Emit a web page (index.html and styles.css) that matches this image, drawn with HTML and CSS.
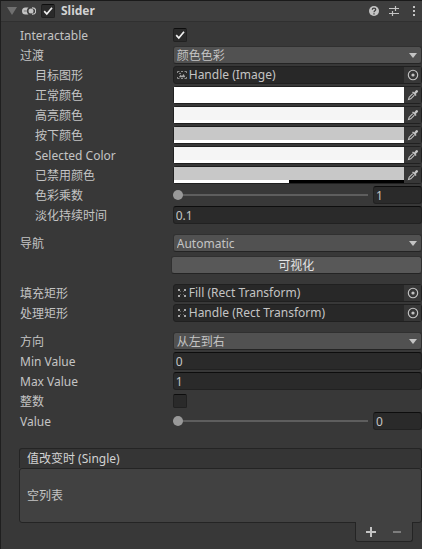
FILE: index.html
```
<!DOCTYPE html>
<html lang="zh-CN">
<head>
<meta charset="utf-8">
<meta name="viewport" content="width=device-width, initial-scale=1">
<title>Slider</title>
<link rel="stylesheet" href="styles.css">
</head>
<body>
<svg class="defs" aria-hidden="true">
  <symbol id="check" viewBox="0 0 14 14"><path d="M3.2 7.2 5.8 10 11 3.8" fill="none" stroke="currentColor" stroke-width="1.7"/></symbol>
  <symbol id="picker" viewBox="0 0 12 12"><circle cx="6" cy="6" r="4.7" fill="none" stroke="currentColor" stroke-width="1.1"/><circle cx="6" cy="6" r="1.6" fill="currentColor"/></symbol>
  <symbol id="dropper" viewBox="0 0 12 12"><path d="M5.800 4.600 2.200 8.200 1.500 10.500 3.800 9.800 7.400 6.200" fill="none" stroke="currentColor" stroke-width="1.100"/><path d="M5 3.200 6 2.400 7.200 3.400 8.800 1.500Q9.800 .6 10.700 1.400T10.600 3.300L8.700 4.900 9.600 6 8.700 7Z" fill="currentColor"/></symbol>
  <symbol id="rect" viewBox="0 0 10 10"><path d="M1 1h2v2H1zM7 1h2v2H7zM1 7h2v2H1zM7 7h2v2H7z" fill="currentColor"/><path d="M3 3h1v1H3zM6 3h1v1H6zM3 6h1v1H3zM6 6h1v1H6z" fill="currentColor" opacity=".5"/></symbol>
  <symbol id="image" viewBox="0 0 10 10"><path d="M.5 3V1.500h2M7.500 1.500h2V3M9.500 7v1.500h-2M2.500 8.500h-2V7M4 1.500h2M4 8.500h2" fill="none" stroke="currentColor" stroke-width=".8"/><path d="M1.800 7.200 3.600 4.800 5 6.100 6.700 4.100 8.400 7.200Z" fill="currentColor"/><circle cx="3" cy="3.500" r=".8" fill="currentColor"/></symbol>
</svg>
<main class="inspector">
  <header class="header">
    <button class="icon-button" aria-label="折叠"><svg class="fold" viewBox="0 0 10 8"><path d="M0 0h10L5 8Z" fill="currentColor"/></svg></button>
    <svg class="component" viewBox="0 0 14 8" aria-hidden="true"><path d="M3.500 .5h3a4.500 4.500 0 0 0 0 7h-3a3.500 3.500 0 0 1 0-7Z" fill="#c4c4c4"/><path d="M1.800 4h3" stroke="#777"/><circle cx="9" cy="4" r="2.500" fill="#c4c4c4"/><path d="M10 .8h.5a3.200 3.200 0 0 1 0 6.400H10" fill="none" stroke="#c4c4c4" stroke-width="1.200"/></svg>
    <span class="check"><input type="checkbox" id="enabled" checked><svg><use href="#check"/></svg></span>
    <label class="title" for="enabled">Slider</label>
    <button class="icon-button" aria-label="帮助"><svg class="tool" viewBox="0 0 12 12"><circle cx="6" cy="6" r="5" fill="currentColor"/><path d="M4.300 4.700C4.300 2.500 7.700 2.600 7.700 4.600 7.700 5.900 6 5.700 6 7.300M6 8.200v1.300" fill="none" stroke="#3e3e3e" stroke-width="1.300"/></svg></button>
    <button class="icon-button" aria-label="预设"><svg class="tool" viewBox="0 0 12 12"><path d="M1 3.500h6M8 3.500h3M7.500 1v5M1 8.500h3M5 8.500h6M4.500 6v5" fill="none" stroke="currentColor" stroke-width="1.200"/></svg></button>
    <button class="icon-button" aria-label="更多"><svg class="tool" viewBox="0 0 12 12"><path d="M5 1h2v2H5zM5 5h2v2H5zM5 9h2v2H5z" fill="currentColor"/></svg></button>
  </header>

  <form class="properties">
    <section class="group">
      <div class="row"><label for="interactable">Interactable</label><span class="check"><input type="checkbox" id="interactable" checked><svg><use href="#check"/></svg></span></div>
      <div class="row"><label for="transition">过渡</label><span class="dropdown"><select id="transition"><option>颜色色彩</option></select></span></div>
      <div class="row sub"><label for="target">目标图形</label><div class="object"><svg class="type"><use href="#image"/></svg><span>Handle (Image)</span><button type="button" id="target"><svg><use href="#picker"/></svg></button></div></div>
      <div class="row sub"><label for="normal">正常颜色</label><div class="color"><span class="swatch"><input type="color" id="normal" value="#ffffff"><i class="alpha"></i></span><button type="button" aria-label="拾取正常颜色"><svg><use href="#dropper"/></svg></button></div></div>
      <div class="row sub"><label for="highlighted">高亮颜色</label><div class="color"><span class="swatch"><input type="color" id="highlighted" value="#f5f5f5"><i class="alpha"></i></span><button type="button" aria-label="拾取高亮颜色"><svg><use href="#dropper"/></svg></button></div></div>
      <div class="row sub"><label for="pressed">按下颜色</label><div class="color"><span class="swatch"><input type="color" id="pressed" value="#c8c8c8"><i class="alpha"></i></span><button type="button" aria-label="拾取按下颜色"><svg><use href="#dropper"/></svg></button></div></div>
      <div class="row sub"><label for="selected">Selected Color</label><div class="color"><span class="swatch"><input type="color" id="selected" value="#f5f5f5"><i class="alpha"></i></span><button type="button" aria-label="拾取 Selected Color"><svg><use href="#dropper"/></svg></button></div></div>
      <div class="row sub"><label for="disabled">已禁用颜色</label><div class="color"><span class="swatch"><input type="color" id="disabled" value="#c8c8c8"><i class="alpha half"></i></span><button type="button" aria-label="拾取已禁用颜色"><svg><use href="#dropper"/></svg></button></div></div>
      <div class="row sub"><label for="multiplier">色彩乘数</label><div class="range"><input type="range" min="1" max="5" value="1" aria-label="色彩乘数"><input type="text" id="multiplier" value="1"></div></div>
      <div class="row sub"><label for="fade">淡化持续时间</label><input type="text" id="fade" value="0.1"></div>
    </section>

    <section class="group wide">
      <div class="row"><label for="navigation">导航</label><span class="dropdown"><select id="navigation"><option>Automatic</option></select></span></div>
      <div class="row"><button type="button" class="visualize">可视化</button></div>
    </section>

    <section class="group">
      <div class="row"><label for="fill">填充矩形</label><div class="object"><svg class="type"><use href="#rect"/></svg><span>Fill (Rect Transform)</span><button type="button" id="fill"><svg><use href="#picker"/></svg></button></div></div>
      <div class="row"><label for="handle">处理矩形</label><div class="object"><svg class="type"><use href="#rect"/></svg><span>Handle (Rect Transform)</span><button type="button" id="handle"><svg><use href="#picker"/></svg></button></div></div>
    </section>

    <section class="group">
      <div class="row"><label for="direction">方向</label><span class="dropdown"><select id="direction"><option>从左到右</option></select></span></div>
      <div class="row"><label for="min">Min Value</label><input type="text" id="min" value="0"></div>
      <div class="row"><label for="max">Max Value</label><input type="text" id="max" value="1"></div>
      <div class="row"><label for="whole">整数</label><span class="check"><input type="checkbox" id="whole"></span></div>
      <div class="row"><label for="value">Value</label><div class="range"><input type="range" min="0" max="1" value="0" aria-label="Value"><input type="text" id="value" value="0"></div></div>
    </section>
  </form>

  <section class="events">
    <h2>值改变时 (Single)</h2>
    <p>空列表</p>
    <div class="actions">
      <button class="icon-button" aria-label="添加"><svg class="tool" viewBox="0 0 12 12"><path d="M1 6h10M6 1v10" stroke="currentColor" stroke-width="2"/></svg></button>
      <button class="icon-button" aria-label="移除" disabled><svg class="tool" viewBox="0 0 12 12"><path d="M2 6h8" stroke="currentColor" stroke-width="2"/></svg></button>
    </div>
  </section>
</main>
</body>
</html>
```
FILE: styles.css
```
* { box-sizing: border-box; }

body {
  margin: 0;
  background: #383838;
  color: #c4c4c4;
  font: 12px/16px "Noto Sans", "Noto Sans CJK SC", sans-serif;
}

button, input, select { margin: 0; font: inherit; color: inherit; }
svg { display: block; }
.defs { display: none; }

.inspector {
  min-height: 100vh;
  border-top: 1px solid #1a1a1a;
  border-left: 1px solid #1f1f1f;
}

.header {
  display: flex;
  align-items: center;
  height: 21px;
  padding: 0 2px 0 6px;
  background: #3e3e3e;
  border-bottom: 1px solid #303030;
}

.icon-button {
  display: grid;
  place-items: center;
  padding: 0;
  border: 0;
  background: none;
}

.header .icon-button { margin-right: 8px; }
.header .icon-button:last-child { margin-right: 0; }
.fold { width: 10px; height: 8px; color: #707070; }
.component { width: 14px; height: 8px; margin: 0 5px 0 -3px; }
.tool { width: 12px; height: 12px; }
.title { flex: 1; margin-left: 6px; font-weight: bold; color: #d2d2d2; }

.check { display: grid; width: 14px; height: 14px; }
.check > * { grid-area: 1 / 1; width: 14px; height: 14px; }
.check svg { color: #f0f0f0; pointer-events: none; }
.check input {
  appearance: none;
  background: #2a2a2a;
  border: 1px solid #212121;
  border-top-color: #0d0d0d;
  border-radius: 2px;
}

.properties {
  display: grid;
  gap: 10px;
  padding: 4px 0 18px 19px;
}

.group { display: grid; gap: 2px; }
.group.wide { gap: 4px; }

.row {
  display: grid;
  grid-template-columns: 38% minmax(0, 1fr);
  align-items: center;
  height: 18px;
}

.row > :last-child { grid-column: 2; }
.sub > label { padding-left: 15px; }
.row > label { padding-top: 1px; white-space: nowrap; line-height: 17px; }

input[type="text"] {
  width: 100%;
  height: 18px;
  padding: 1px 2px 0;
  background: #2a2a2a;
  border: 1px solid #212121;
  border-top-color: #0d0d0d;
  border-radius: 3px;
}

.dropdown { position: relative; }
.dropdown::after {
  content: "";
  position: absolute;
  top: 7px;
  right: 5px;
  width: 8px;
  height: 5px;
  background: #c4c4c4;
  clip-path: polygon(0 0, 100% 0, 50% 100%);
  pointer-events: none;
}

select {
  display: block;
  appearance: none;
  width: 100%;
  height: 18px;
  padding: 1px 3px 0;
  background: #515151;
  border: 1px solid #303030;
  border-bottom-color: #242424;
  border-radius: 3px;
}

.object, .color {
  display: flex;
  align-items: center;
  height: 18px;
  border: 1px solid #202020;
  border-radius: 3px;
}

.object { padding-left: 3px; background: #282828; }
.object span { flex: 1; margin-left: 2px; white-space: nowrap; }
.type { width: 10px; height: 10px; color: #a8a8a8; }

.object button, .color button {
  display: grid;
  place-items: center;
  width: 17px;
  height: 16px;
  padding: 0;
  border: 0;
  background: #373737;
}

.object button svg, .color button svg { width: 12px; height: 12px; }

.swatch { display: grid; grid-template-rows: 13px 3px; flex: 1; }
input[type="color"] {
  appearance: none;
  width: 100%;
  height: 13px;
  padding: 0;
  border: 0;
  background: none;
}
input[type="color"]::-webkit-color-swatch-wrapper { padding: 0; }
input[type="color"]::-webkit-color-swatch { border: 0; border-radius: 0; }
.alpha { background: #fff; }
.alpha.half { background: linear-gradient(to right, #fff 50%, #000 50%); }

.range {
  display: grid;
  grid-template-columns: minmax(0, 1fr) 49px;
  gap: 5px;
  align-items: center;
}

input[type="range"] {
  appearance: none;
  width: 100%;
  height: 10px;
  background: linear-gradient(#5e5e5e, #5e5e5e) center / 100% 2px no-repeat;
}
input[type="range"]::-webkit-slider-thumb {
  appearance: none;
  width: 10px;
  height: 10px;
  border-radius: 50%;
  background: #999;
}

.visualize {
  height: 18px;
  margin-left: -2px;
  padding: 1px 0 0;
  line-height: 16px;
  background: #585858;
  border: 1px solid #303030;
  border-bottom-color: #242424;
  border-radius: 3px;
  color: #e4e4e4;
}

.events { margin-left: 18px; }
.events h2 {
  margin: 0;
  padding: 2px 7px 0;
  height: 20px;
  font: inherit;
  color: #d2d2d2;
  background: #353535;
  border: 1px solid #242424;
  border-bottom: 0;
  border-radius: 3px 3px 0 0;
}
.events p {
  margin: 0;
  padding: 19px 7px 18px;
  background: #414141;
  border: 1px solid #242424;
  border-radius: 3px;
}

.actions {
  position: relative;
  display: flex;
  justify-content: space-between;
  width: 58px;
  height: 20px;
  margin: -1px 9px 0 auto;
  padding: 0 9px;
  background: #414141;
  border: 1px solid #242424;
  border-top: 0;
  border-radius: 0 0 3px 3px;
}
.actions .icon-button:disabled { color: #7d7d7d; }
```
